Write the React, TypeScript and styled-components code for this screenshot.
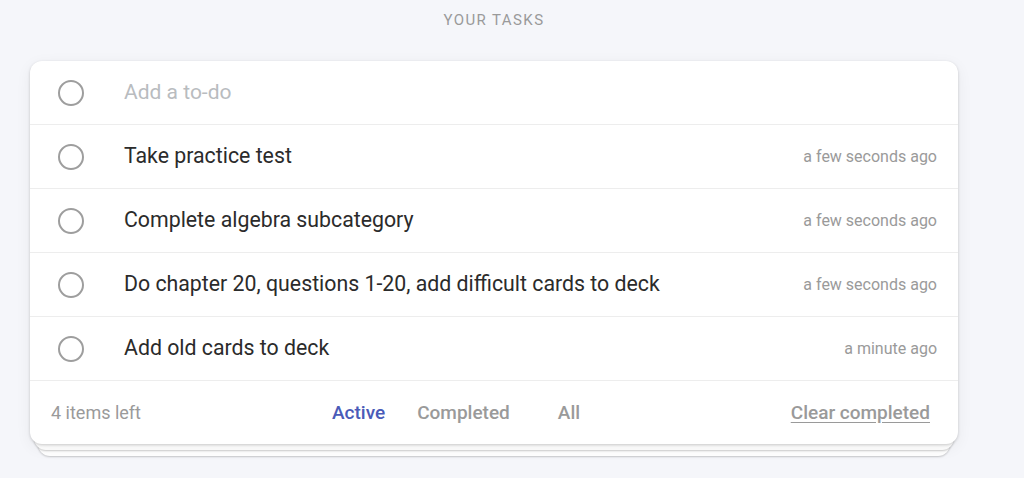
import styled, { createGlobalStyle } from "styled-components";

const GlobalStyle = createGlobalStyle`
  html, body {
    margin: 0;
    padding: 0;
    background: #f5f6fa;
    font-family: Roboto, "Liberation Sans", Arial, sans-serif;
  }
`;

interface Task {
  text: string;
  time: string;
}

const TASKS: Task[] = [
  { text: "Take practice test", time: "a few seconds ago" },
  { text: "Complete algebra subcategory", time: "a few seconds ago" },
  {
    text: "Do chapter 20, questions 1-20, add difficult cards to deck",
    time: "a few seconds ago",
  },
  { text: "Add old cards to deck", time: "a minute ago" },
];

const FILTERS = ["Active", "Completed", "All"];

const App = () => (
  <Page>
    <GlobalStyle />
    <Title>Your tasks</Title>
    <Stack>
      <Card>
        <Row>
          <Check />
          <NewInput placeholder="Add a to-do" />
        </Row>
        {TASKS.map((task) => (
          <Row key={task.text}>
            <Check />
            <TaskText>{task.text}</TaskText>
            <Time>{task.time}</Time>
          </Row>
        ))}
        <Footer>
          <Count>4 items left</Count>
          <Filters>
            {FILTERS.map((f) => (
              <Filter key={f} active={f === "Active"}>
                {f}
              </Filter>
            ))}
          </Filters>
          <Clear>Clear completed</Clear>
        </Footer>
      </Card>
      <Sheet inset={4} />
      <Sheet inset={8} />
    </Stack>
  </Page>
);

const Page = styled.div`
  width: 988px;
  min-height: 478px;
  display: flex;
  flex-direction: column;
  align-items: center;
`;

const Title = styled.h1`
  margin: 12px 0 0;
  height: 49px;
  font-size: 15px;
  font-weight: 400;
  letter-spacing: 1.4px;
  text-transform: uppercase;
  color: #9a9a9a;
  line-height: 16px;
`;

const Stack = styled.div`
  width: 928px;
  display: flex;
  flex-direction: column;
  align-items: stretch;
`;

const Card = styled.div`
  position: relative;
  z-index: 3;
  background: #fff;
  border-radius: 12px;
  box-shadow: 0 1px 3px rgba(0, 0, 0, 0.18), 0 4px 16px rgba(0, 0, 0, 0.06);
  overflow: hidden;
`;

const Sheet = styled.div<{ inset: number }>`
  position: relative;
  z-index: ${(p) => 3 - p.inset / 4};
  height: 12px;
  margin: -6px ${(p) => p.inset}px 0;
  background: #fff;
  border-radius: 0 0 12px 12px;
  box-shadow: 0 1px 2px rgba(0, 0, 0, 0.2);
`;

const Row = styled.div`
  height: 63px;
  display: flex;
  align-items: center;
  padding: 0 21px 0 28px;
  border-bottom: 1px solid #ededed;
`;

const Check = styled.span`
  flex: none;
  box-sizing: border-box;
  width: 26px;
  height: 26px;
  border: 2px solid #9e9e9e;
  border-radius: 50%;
  margin-right: 40px;
`;

const NewInput = styled.input`
  flex: 1;
  border: none;
  outline: none;
  padding: 0 0 2px;
  font-family: inherit;
  font-size: 21px;
  color: #333;
  background: transparent;

  &::placeholder {
    color: #b9bcbf;
  }
`;

const TaskText = styled.span`
  flex: 1;
  font-size: 21.3px;
  line-height: 24px;
  padding-bottom: 2px;
  color: #2b2b2b;
`;

const Time = styled.span`
  font-size: 16px;
  color: #9a9a9a;
`;

const Footer = styled.div`
  height: 63px;
  display: flex;
  align-items: center;
  padding: 0 28px 0 21px;
`;

const Count = styled.span`
  flex: 0 0 281px;
  font-size: 18px;
  color: #9a9a9a;
`;

const Filters = styled.div`
  display: flex;
  gap: 32px;
`;

const Filter = styled.span<{ active?: boolean }>`
  font-size: 19px;
  font-weight: 500;
  color: ${(p) => (p.active ? "#4a5bb8" : "#9a9a9a")};

  &:nth-child(3) {
    margin-left: 16px;
  }
`;

const Clear = styled.span`
  margin-left: auto;
  font-size: 19px;
  font-weight: 500;
  color: #9a9a9a;
  text-decoration: underline;
  text-underline-offset: 3px;
`;

export default App;
